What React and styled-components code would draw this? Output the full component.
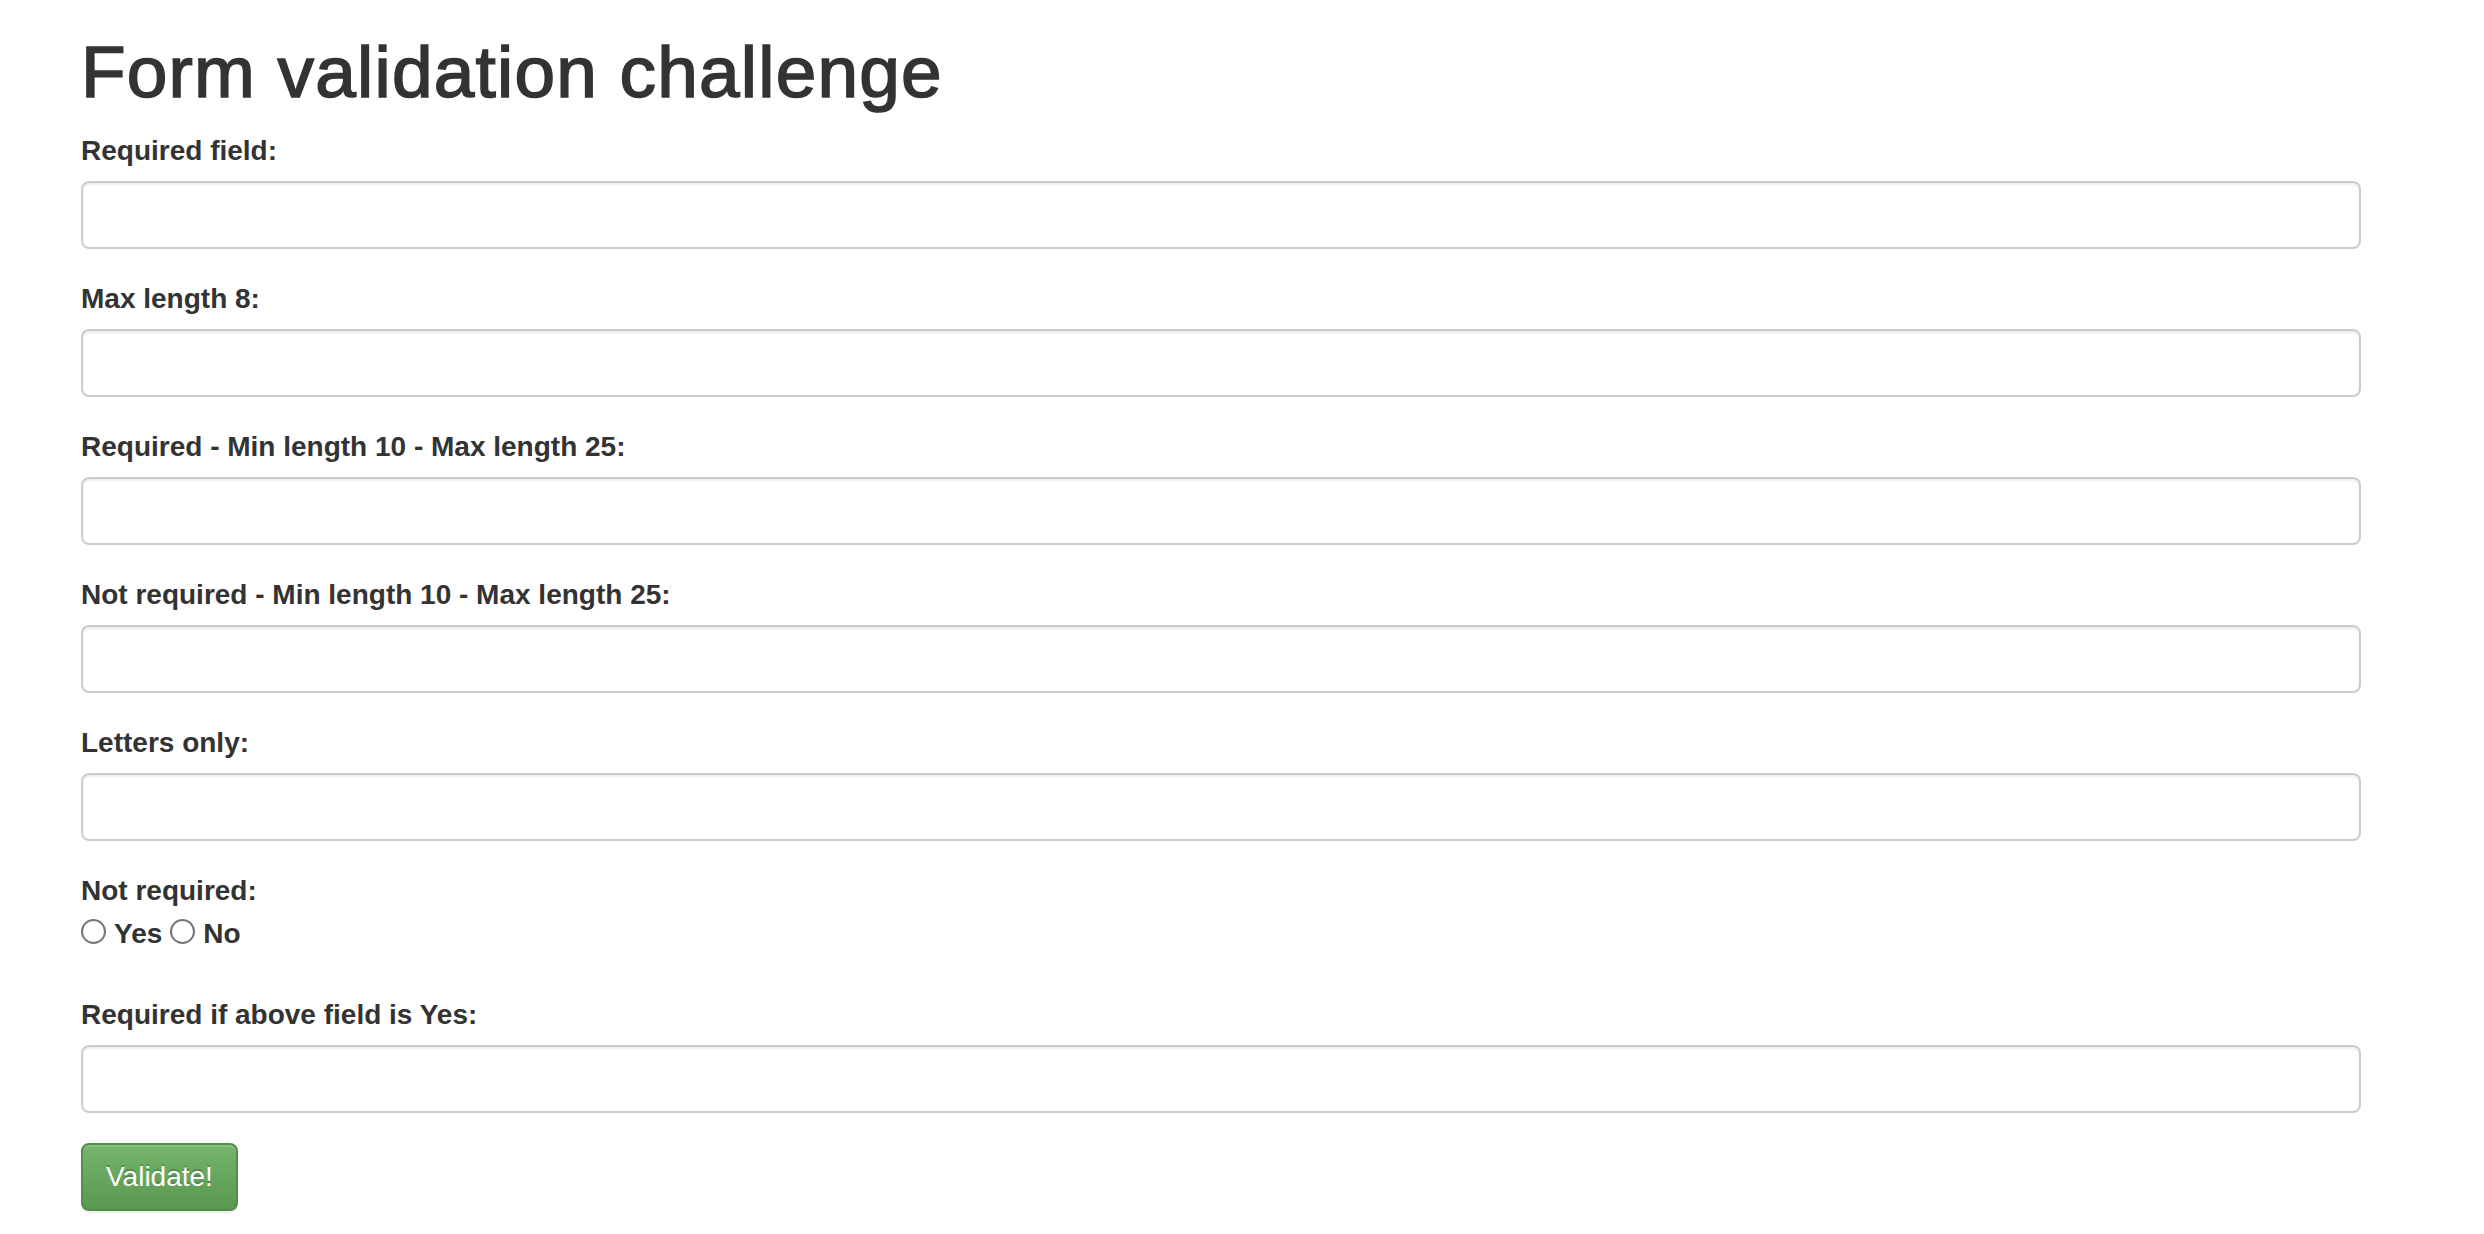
import React from "react";
import styled, { createGlobalStyle } from "styled-components";

const GlobalStyle = createGlobalStyle`
  html, body { margin: 0; padding: 0; background: #fff; }
  body {
    font-family: "Liberation Sans", Arial, Helvetica, sans-serif;
    color: #333;
    font-size: 28px;
    line-height: 40px;
  }
  * { box-sizing: border-box; }
`;

const Page = styled.div`
  padding: 32px 123px 20px 81px;
`;

const Title = styled.h1`
  margin: 0 0 20px;
  font-size: 73px;
  line-height: 79px;
  font-weight: 400;
  letter-spacing: 1.2px;
  color: #333;
  -webkit-text-stroke: 1.6px #333;
`;

const Form = styled.form`
  display: flex;
  flex-direction: column;
`;

const Group = styled.div`
  display: flex;
  flex-direction: column;
  margin-bottom: ${(p) => p.$mb ?? 30}px;
`;

const Label = styled.label`
  display: block;
  font-weight: 700;
  font-size: 28px;
  line-height: 40px;
  margin-bottom: ${(p) => p.$mb ?? 10}px;
`;

const Input = styled.input`
  display: block;
  width: 100%;
  height: 68px;
  padding: 12px 24px;
  font-family: inherit;
  font-size: 28px;
  color: #555;
  background: #fff;
  border: 2px solid #ccc;
  border-radius: 8px;
  box-shadow: inset 0 2px 2px rgba(0, 0, 0, 0.075);
  outline: none;
`;

const RadioRow = styled.div`
  display: flex;
  align-items: center;
  height: 40px;
  margin-top: 3px;
`;

const RadioLabel = styled.label`
  display: inline-flex;
  align-items: center;
  font-weight: 700;
  font-size: 28px;
  line-height: 40px;
  margin-right: 8px;
`;

const Radio = styled.input.attrs({ type: "radio" })`
  appearance: none;
  -webkit-appearance: none;
  width: 25px;
  height: 25px;
  margin: 0 8px 0 0;
  border: 2px solid #767676;
  border-radius: 50%;
  background: #fff;
  position: relative;
  top: -3px;
`;

const Button = styled.button`
  align-self: flex-start;
  height: 68px;
  padding: 0 23px;
  font-family: inherit;
  font-size: 28px;
  line-height: 40px;
  color: #fff;
  background-image: linear-gradient(to bottom, #74b56b 0%, #5b9752 100%);
  border: 2px solid #52904a;
  border-radius: 8px;
  box-shadow: inset 0 2px 0 rgba(255, 255, 255, 0.15), 0 2px 2px rgba(0, 0, 0, 0.075);
  text-shadow: 0 -2px 0 rgba(0, 0, 0, 0.2);
  cursor: pointer;
`;

const fields = [
  "Required field:",
  "Max length 8:",
  "Required - Min length 10 - Max length 25:",
  "Not required - Min length 10 - Max length 25:",
  "Letters only:",
];

export default function App() {
  return (
    <>
      <GlobalStyle />
      <Page>
        <Title>Form validation challenge</Title>
        <Form onSubmit={(e) => e.preventDefault()}>
          {fields.map((f, i) => (
            <Group key={i}>
              <Label>{f}</Label>
              <Input type="text" />
            </Group>
          ))}
          <Group $mb={41}>
            <Label $mb={0}>Not required:</Label>
            <RadioRow>
              <RadioLabel>
                <Radio name="nr" />
                Yes
              </RadioLabel>
              <RadioLabel>
                <Radio name="nr" />
                No
              </RadioLabel>
            </RadioRow>
          </Group>
          <Group>
            <Label>Required if above field is Yes:</Label>
            <Input type="text" />
          </Group>
          <Button type="submit">Validate!</Button>
        </Form>
      </Page>
    </>
  );
}
